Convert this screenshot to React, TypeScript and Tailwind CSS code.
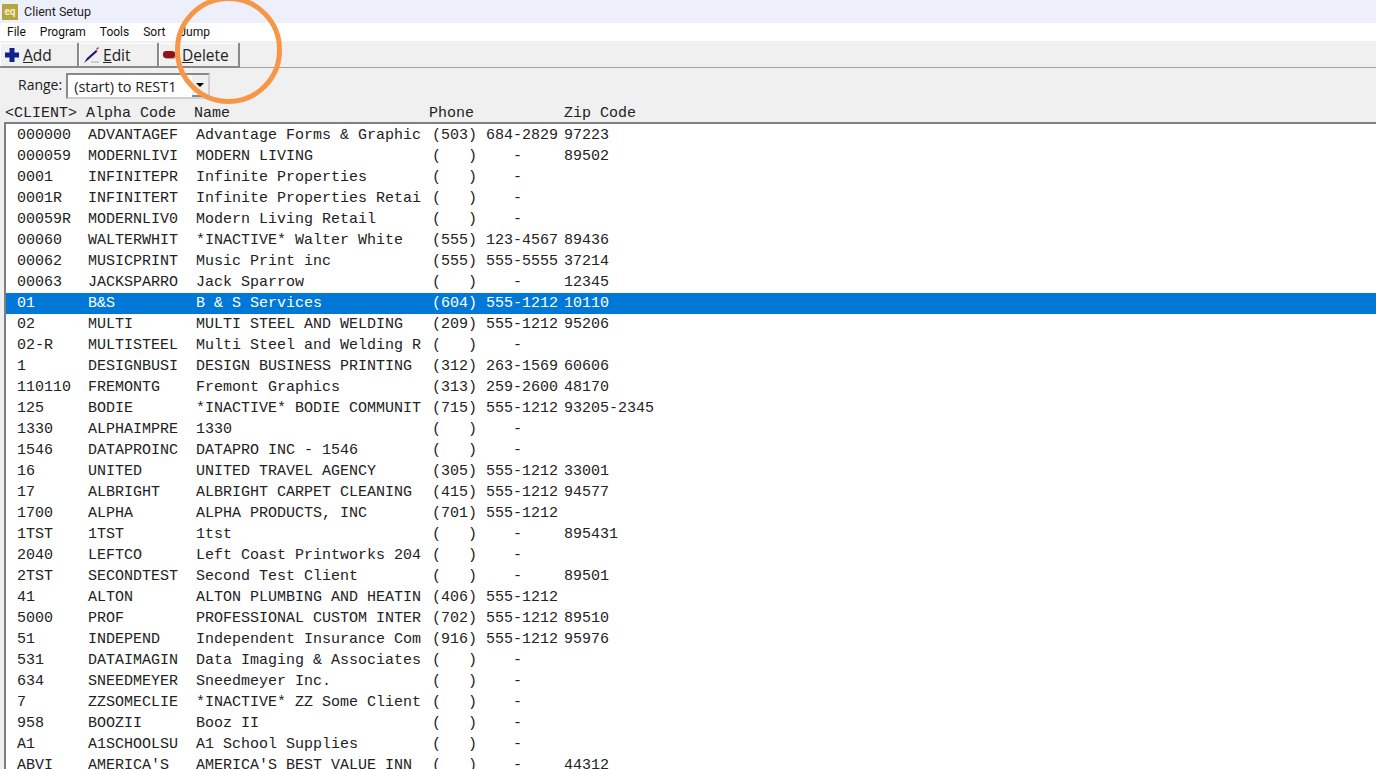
const rows = [
  ["000000", "ADVANTAGEF", "Advantage Forms & Graphic", "(503) 684-2829", "97223"],
  ["000059", "MODERNLIVI", "MODERN LIVING", "(   )    -", "89502"],
  ["0001", "INFINITEPR", "Infinite Properties", "(   )    -", ""],
  ["0001R", "INFINITERT", "Infinite Properties Retai", "(   )    -", ""],
  ["00059R", "MODERNLIV0", "Modern Living Retail", "(   )    -", ""],
  ["00060", "WALTERWHIT", "*INACTIVE* Walter White", "(555) 123-4567", "89436"],
  ["00062", "MUSICPRINT", "Music Print inc", "(555) 555-5555", "37214"],
  ["00063", "JACKSPARRO", "Jack Sparrow", "(   )    -", "12345"],
  ["01", "B&S", "B & S Services", "(604) 555-1212", "10110"],
  ["02", "MULTI", "MULTI STEEL AND WELDING", "(209) 555-1212", "95206"],
  ["02-R", "MULTISTEEL", "Multi Steel and Welding R", "(   )    -", ""],
  ["1", "DESIGNBUSI", "DESIGN BUSINESS PRINTING", "(312) 263-1569", "60606"],
  ["110110", "FREMONTG", "Fremont Graphics", "(313) 259-2600", "48170"],
  ["125", "BODIE", "*INACTIVE* BODIE COMMUNIT", "(715) 555-1212", "93205-2345"],
  ["1330", "ALPHAIMPRE", "1330", "(   )    -", ""],
  ["1546", "DATAPROINC", "DATAPRO INC - 1546", "(   )    -", ""],
  ["16", "UNITED", "UNITED TRAVEL AGENCY", "(305) 555-1212", "33001"],
  ["17", "ALBRIGHT", "ALBRIGHT CARPET CLEANING", "(415) 555-1212", "94577"],
  ["1700", "ALPHA", "ALPHA PRODUCTS, INC", "(701) 555-1212", ""],
  ["1TST", "1TST", "1tst", "(   )    -", "895431"],
  ["2040", "LEFTCO", "Left Coast Printworks 204", "(   )    -", ""],
  ["2TST", "SECONDTEST", "Second Test Client", "(   )    -", "89501"],
  ["41", "ALTON", "ALTON PLUMBING AND HEATIN", "(406) 555-1212", ""],
  ["5000", "PROF", "PROFESSIONAL CUSTOM INTER", "(702) 555-1212", "89510"],
  ["51", "INDEPEND", "Independent Insurance Com", "(916) 555-1212", "95976"],
  ["531", "DATAIMAGIN", "Data Imaging & Associates", "(   )    -", ""],
  ["634", "SNEEDMEYER", "Sneedmeyer Inc.", "(   )    -", ""],
  ["7", "ZZSOMECLIE", "*INACTIVE* ZZ Some Client", "(   )    -", ""],
  ["958", "BOOZII", "Booz II", "(   )    -", ""],
  ["A1", "A1SCHOOLSU", "A1 School Supplies", "(   )    -", ""],
  ["ABVI", "AMERICA'S", "AMERICA'S BEST VALUE INN", "(   )    -", "44312"],
];

const menus = ["File", "Program", "Tools", "Sort", "Jump"];

function ToolButton({ label, icon, width }: { label: string; icon: React.ReactNode; width: string }) {
  return (
    <div className={`${width} h-[25px] flex items-center border-r-2 border-b-2 border-[#8a8a8a] bg-[#f0f0f0] shadow-[inset_1px_1px_0_#ffffff]`}>
      {icon}
      <span className="pt-[2px] text-[15.5px] text-[#222]">
        <span className="underline">{label[0]}</span>
        {label.slice(1)}
      </span>
    </div>
  );
}

export default function App() {
  return (
    <div className="relative w-[1376px] h-[769px] overflow-hidden bg-[#f0f0f0] font-['Open_Sans','Liberation_Sans',sans-serif]">
      {/* Title bar */}
      <div className="h-[23px] bg-[#edf0fb] flex items-center pl-[2px] font-['Roboto',sans-serif]">
        <div className="w-[16px] h-[16px] bg-[#b5a642] text-[#f5eecb] text-[10px] leading-[16px] text-center font-bold">eq</div>
        <span className="ml-[6px] pt-[2px] text-[12.5px] text-[#222]">Client Setup</span>
      </div>

      {/* Menu */}
      <div className="h-[18px] bg-white flex items-center pl-[7px] gap-[14px] text-[12px] text-[#111] font-['Roboto',sans-serif]">
        {menus.map((m) => (
          <span key={m}>{m}</span>
        ))}
      </div>

      {/* Toolbar */}
      <div className="h-[27px] flex items-start pt-[2px] border-b border-[#a0a0a0]">
        <ToolButton
          width="w-[79px]"
          label="Add"
          icon={
            <svg width="16" height="16" viewBox="0 0 16 16" className="ml-[4px] mr-[3px]">
              <path d="M5.500 1h5v4.500H15v5h-4.500V15h-5v-4.500H1v-5h4.500z" fill="#10208c" />
            </svg>
          }
        />
        <ToolButton
          width="w-[80px]"
          label="Edit"
          icon={
            <svg width="18" height="18" viewBox="0 0 18 18" className="ml-[4px] mr-[2px]">
              <path d="M1 17l3-5 9-8 1.500 1.500-9 8z" fill="#1a1a70" />
              <path d="M13.500 3.500L15.500 1.500" stroke="#c03030" strokeWidth="1.500" fill="none" />
              <path d="M8 16h8" stroke="#aaa" strokeWidth="1" fill="none" />
            </svg>
          }
        />
        <ToolButton
          width="w-[81px]"
          label="Delete"
          icon={<div className="ml-[4px] mr-[7px] w-[12px] h-[7px] rounded-[3px] bg-[#8f1418] shadow-[1px_1px_0_#b0a0a0]" />}
        />
      </div>

      {/* Range */}
      <div className="h-[32px] flex items-center pl-[18px]">
        <span className="text-[14px] text-[#222]">Range:</span>
        <div className="ml-[4px] mt-[4px] w-[144px] h-[26px] bg-white border-2 border-t-[#8a8a8a] border-l-[#8a8a8a] border-r-[#d0d0d0] border-b-[#d0d0d0] flex items-center">
          <span className="flex-1 pl-[6px] pt-[2px] text-[14.500px] text-[#222]">(start) to REST1</span>
          <div className="w-[16px] h-full bg-[#f0f0f0] border-b-2 border-[#8a8a8a] flex items-center justify-center">
            <div className="w-0 h-0 border-x-[4px] border-x-transparent border-t-[4px] border-t-black" />
          </div>
        </div>
      </div>

      {/* Column header */}
      <div className="h-[22px] pt-[6px] flex items-center font-['Liberation_Mono',monospace] text-[15px] text-[#222] whitespace-pre">
        <span className="w-[86px] pl-[5px]">{"<CLIENT>"}</span>
        <span className="w-[108px]">Alpha Code</span>
        <span className="w-[235px]">Name</span>
        <span className="w-[135px]">Phone</span>
        <span>Zip Code</span>
      </div>

      {/* List */}
      <div className="h-[700px] ml-[4px] bg-white border-l-2 border-t-2 border-[#7f7f7f] pt-[1px] font-['Liberation_Mono',monospace] text-[15px] text-[#222] whitespace-pre">
        {rows.map((r, i) => (
          <div key={r[0]} className={`h-[21px] pt-[2px] flex items-center ${i === 8 ? "bg-[#0078d7] text-white" : ""}`}>
            <span className="w-[82px] pl-[11px]">{r[0]}</span>
            <span className="w-[108px]">{r[1]}</span>
            <span className="w-[236px]">{r[2]}</span>
            <span className="w-[132px]">{r[3]}</span>
            <span>{r[4]}</span>
          </div>
        ))}
      </div>

      {/* Highlight circle drawn over the screenshot */}
      <div className="absolute left-[175px] top-[-4px] w-[107px] h-[108px] rounded-full border-[5px] border-[#f79646]" />
    </div>
  );
}
